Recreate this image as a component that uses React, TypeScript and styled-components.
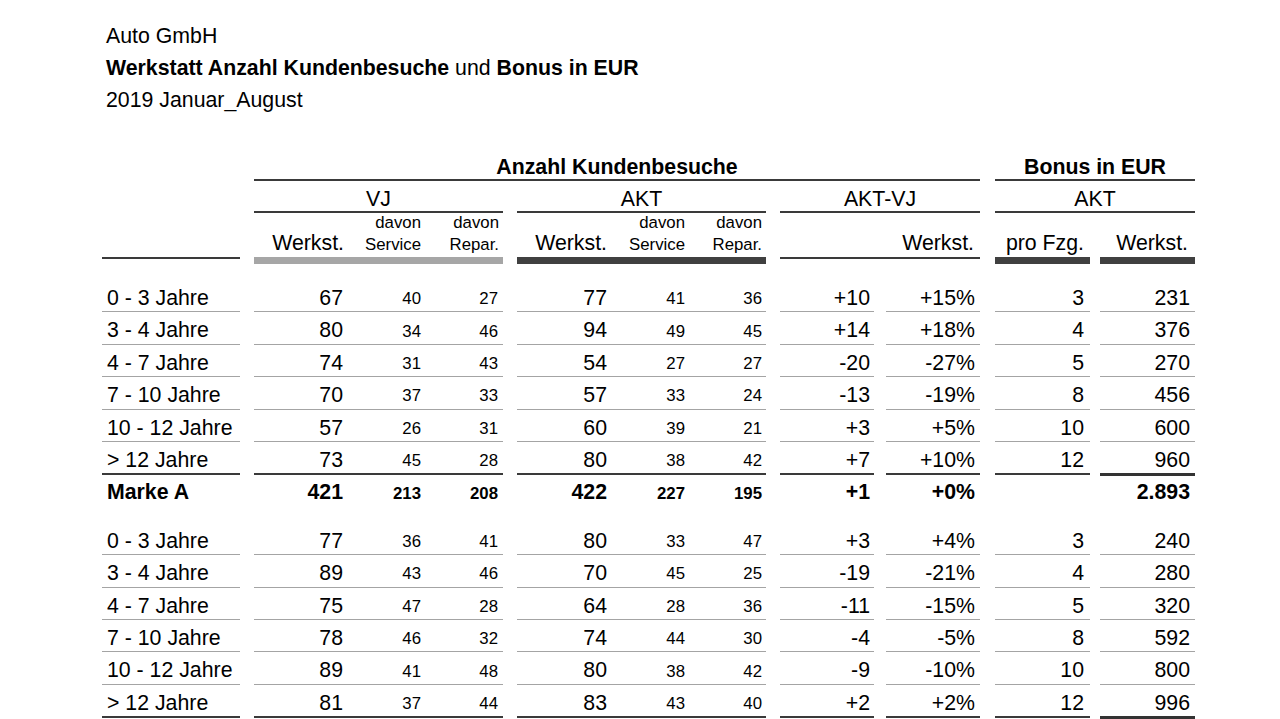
import React from "react";
import styled, { createGlobalStyle } from "styled-components";

const GlobalStyle = createGlobalStyle`
  html, body { margin: 0; padding: 0; background: #ffffff; }
  body {
    font-family: "Liberation Sans", Arial, Helvetica, sans-serif;
    color: #000000;
  }
`;

const COLS =
  "138px 14px 93px 78px 78px 14px 93px 78px 78px 14px 94px 12px 94px 15px 95px 10px 95px";

const BIG = "21.3px";
const SMALL = "16.8px";

const Page = styled.div`
  width: 1280px;
  height: 719px;
  overflow: hidden;
  box-sizing: border-box;
  padding: 20px 0 0 102px;
`;

const Title = styled.div`
  padding-left: 4px;
  font-size: ${BIG};
  line-height: 32px;
  margin-bottom: 33px;
`;

const TitleLine = styled.div``;

const B = styled.b`
  font-weight: 700;
`;

const HeadRow = styled.div`
  display: grid;
  grid-template-columns: ${COLS};
  align-items: start;
`;

const GroupTitle = styled.div<{ $col: string; $bold?: boolean; $pb: number }>`
  grid-column: ${(p) => p.$col};
  height: 30px;
  box-sizing: content-box;
  border-bottom: 2px solid #3a3a3a;
  display: flex;
  align-items: flex-end;
  justify-content: center;
  font-size: ${BIG};
  line-height: 24px;
  font-weight: ${(p) => (p.$bold ? 700 : 400)};
  & > span {
    padding-bottom: ${(p) => p.$pb}px;
  }
`;

type Bar = "thin" | "grey" | "dark";
const barStyle = (b: Bar) =>
  b === "thin"
    ? "2px solid #3a3a3a"
    : b === "grey"
    ? "7px solid #a6a6a6"
    : "7px solid #404040";

const SubHead = styled.div<{ $col: string; $bar: Bar; $pr: number }>`
  grid-column: ${(p) => p.$col};
  height: 42px;
  padding-bottom: 2px;
  padding-right: ${(p) => p.$pr}px;
  box-sizing: content-box;
  border-bottom: ${(p) => barStyle(p.$bar)};
  display: flex;
  flex-direction: column;
  justify-content: flex-end;
  align-items: flex-end;
  text-align: right;
`;

const SubBig = styled.div`
  font-size: ${BIG};
  line-height: 24px;
`;

const SubSmall = styled.div`
  font-size: ${SMALL};
  line-height: 21.7px;
  margin-bottom: -0.4px;
`;

const Section = styled.div<{ $mt: number }>`
  margin-top: ${(p) => p.$mt}px;
`;

const DataRow = styled.div`
  display: grid;
  grid-template-columns: ${COLS};
  grid-template-rows: 32.4px;
  align-items: start;
`;

type Line = "row" | "sep" | "heavy" | "none";
const lineStyle = (l: Line) =>
  l === "row"
    ? "1px solid #a4a4a4"
    : l === "sep"
    ? "2px solid #3a3a3a"
    : l === "heavy"
    ? "3px solid #333333"
    : "0 none";

const LabelCell = styled.div<{ $line: Line; $bold?: boolean }>`
  grid-column: 1;
  height: 30px;
  padding: 0 0 1.4px 5px;
  box-sizing: content-box;
  border-bottom: ${(p) => lineStyle(p.$line)};
  display: flex;
  align-items: flex-end;
  font-size: ${BIG};
  line-height: 24px;
  font-weight: ${(p) => (p.$bold ? 700 : 400)};
  white-space: nowrap;
`;

const NumCell = styled.div<{
  $col: number;
  $line: Line;
  $small?: boolean;
  $bold?: boolean;
  $pr: number;
}>`
  grid-column: ${(p) => p.$col};
  height: 30px;
  padding: 0 ${(p) => p.$pr}px 1.4px 0;
  box-sizing: content-box;
  border-bottom: ${(p) => lineStyle(p.$line)};
  display: flex;
  align-items: flex-end;
  justify-content: flex-end;
  font-size: ${(p) => (p.$small ? SMALL : BIG)};
  line-height: ${(p) => (p.$small ? "20.8px" : "24px")};
  font-weight: ${(p) => (p.$bold ? 700 : 400)};
  white-space: nowrap;
`;

type Row = {
  label: string;
  v: [string, string, string];
  a: [string, string, string];
  d: [string, string];
  b: [string, string];
};

const sec1: Row[] = [
  { label: "0 - 3 Jahre", v: ["67", "40", "27"], a: ["77", "41", "36"], d: ["+10", "+15%"], b: ["3", "231"] },
  { label: "3 - 4 Jahre", v: ["80", "34", "46"], a: ["94", "49", "45"], d: ["+14", "+18%"], b: ["4", "376"] },
  { label: "4 - 7 Jahre", v: ["74", "31", "43"], a: ["54", "27", "27"], d: ["-20", "-27%"], b: ["5", "270"] },
  { label: "7 - 10 Jahre", v: ["70", "37", "33"], a: ["57", "33", "24"], d: ["-13", "-19%"], b: ["8", "456"] },
  { label: "10 - 12 Jahre", v: ["57", "26", "31"], a: ["60", "39", "21"], d: ["+3", "+5%"], b: ["10", "600"] },
  { label: "> 12 Jahre", v: ["73", "45", "28"], a: ["80", "38", "42"], d: ["+7", "+10%"], b: ["12", "960"] },
];

const total1: Row = {
  label: "Marke A",
  v: ["421", "213", "208"],
  a: ["422", "227", "195"],
  d: ["+1", "+0%"],
  b: ["", "2.893"],
};

const sec2: Row[] = [
  { label: "0 - 3 Jahre", v: ["77", "36", "41"], a: ["80", "33", "47"], d: ["+3", "+4%"], b: ["3", "240"] },
  { label: "3 - 4 Jahre", v: ["89", "43", "46"], a: ["70", "45", "25"], d: ["-19", "-21%"], b: ["4", "280"] },
  { label: "4 - 7 Jahre", v: ["75", "47", "28"], a: ["64", "28", "36"], d: ["-11", "-15%"], b: ["5", "320"] },
  { label: "7 - 10 Jahre", v: ["78", "46", "32"], a: ["74", "44", "30"], d: ["-4", "-5%"], b: ["8", "592"] },
  { label: "10 - 12 Jahre", v: ["89", "41", "48"], a: ["80", "38", "42"], d: ["-9", "-10%"], b: ["10", "800"] },
  { label: "> 12 Jahre", v: ["81", "37", "44"], a: ["83", "43", "40"], d: ["+2", "+2%"], b: ["12", "996"] },
];

function TableRow({ r, last, total }: { r: Row; last?: boolean; total?: boolean }) {
  const ln: Line = total ? "none" : last ? "sep" : "row";
  const heavy: Line = total ? "none" : last ? "heavy" : "row";
  return (
    <DataRow>
      <LabelCell $line={ln} $bold={total}>{r.label}</LabelCell>
      <NumCell $col={3} $line={ln} $bold={total} $pr={4}>{r.v[0]}</NumCell>
      <NumCell $col={4} $line={ln} $bold={total} $small $pr={4}>{r.v[1]}</NumCell>
      <NumCell $col={5} $line={ln} $bold={total} $small $pr={5}>{r.v[2]}</NumCell>
      <NumCell $col={7} $line={ln} $bold={total} $pr={3}>{r.a[0]}</NumCell>
      <NumCell $col={8} $line={ln} $bold={total} $small $pr={3}>{r.a[1]}</NumCell>
      <NumCell $col={9} $line={ln} $bold={total} $small $pr={4}>{r.a[2]}</NumCell>
      <NumCell $col={11} $line={ln} $bold={total} $pr={4}>{r.d[0]}</NumCell>
      <NumCell $col={13} $line={ln} $bold={total} $pr={5}>{r.d[1]}</NumCell>
      <NumCell $col={15} $line={ln} $bold={total} $pr={6}>{r.b[0]}</NumCell>
      <NumCell $col={17} $line={heavy} $bold={total} $pr={5}>{r.b[1]}</NumCell>
    </DataRow>
  );
}

function Davon({ word }: { word: string }) {
  return (
    <>
      <SubSmall>davon</SubSmall>
      <SubSmall>{word}</SubSmall>
    </>
  );
}

export default function App() {
  return (
    <>
      <GlobalStyle />
      <Page>
        <Title>
          <TitleLine>Auto GmbH</TitleLine>
          <TitleLine>
            <B>Werkstatt Anzahl Kundenbesuche</B> und <B>Bonus in EUR</B>
          </TitleLine>
          <TitleLine>2019 Januar_August</TitleLine>
        </Title>

        <HeadRow>
          <GroupTitle $col="3 / 14" $bold $pb={0}>
            <span>Anzahl Kundenbesuche</span>
          </GroupTitle>
          <GroupTitle $col="15 / 18" $bold $pb={0}>
            <span>Bonus in EUR</span>
          </GroupTitle>
        </HeadRow>
        <HeadRow>
          <GroupTitle $col="3 / 6" $pb={0}>
            <span>VJ</span>
          </GroupTitle>
          <GroupTitle $col="7 / 10" $pb={0}>
            <span>AKT</span>
          </GroupTitle>
          <GroupTitle $col="11 / 14" $pb={0}>
            <span>AKT-VJ</span>
          </GroupTitle>
          <GroupTitle $col="15 / 18" $pb={0}>
            <span>AKT</span>
          </GroupTitle>
        </HeadRow>
        <HeadRow>
          <SubHead $col="1" $bar="thin" $pr={0} />
          <SubHead $col="3" $bar="grey" $pr={3}>
            <SubBig>Werkst.</SubBig>
          </SubHead>
          <SubHead $col="4" $bar="grey" $pr={4}>
            <Davon word="Service" />
          </SubHead>
          <SubHead $col="5" $bar="grey" $pr={4}>
            <Davon word="Repar." />
          </SubHead>
          <SubHead $col="7" $bar="dark" $pr={3}>
            <SubBig>Werkst.</SubBig>
          </SubHead>
          <SubHead $col="8" $bar="dark" $pr={3}>
            <Davon word="Service" />
          </SubHead>
          <SubHead $col="9" $bar="dark" $pr={4}>
            <Davon word="Repar." />
          </SubHead>
          <SubHead $col="11 / 14" $bar="thin" $pr={6}>
            <SubBig>Werkst.</SubBig>
          </SubHead>
          <SubHead $col="15" $bar="dark" $pr={6}>
            <SubBig>pro Fzg.</SubBig>
          </SubHead>
          <SubHead $col="17" $bar="dark" $pr={7}>
            <SubBig>Werkst.</SubBig>
          </SubHead>
        </HeadRow>

        <Section $mt={16}>
          {sec1.map((r, i) => (
            <TableRow key={i} r={r} last={i === sec1.length - 1} />
          ))}
          <TableRow r={total1} total />
        </Section>

        <Section $mt={16}>
          {sec2.map((r, i) => (
            <TableRow key={i} r={r} last={i === sec2.length - 1} />
          ))}
        </Section>
      </Page>
    </>
  );
}
